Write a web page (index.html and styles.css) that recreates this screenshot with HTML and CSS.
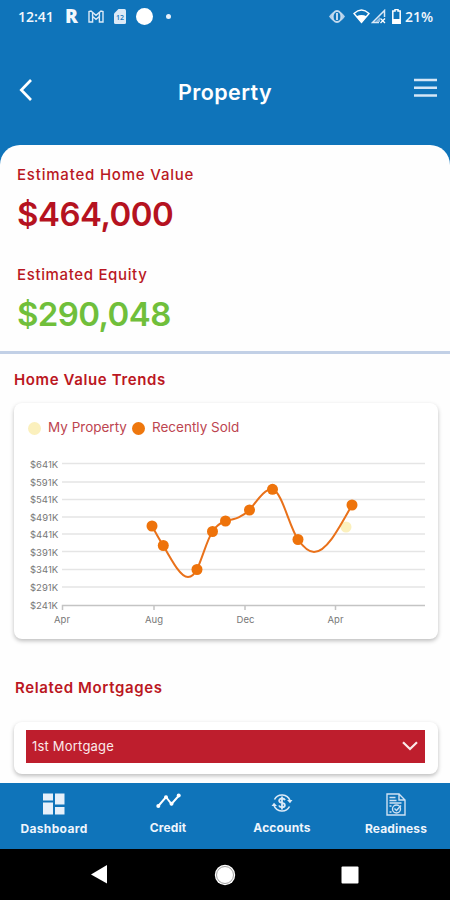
FILE: index.html
```html
<!DOCTYPE html>
<html lang="en">
<head>
    <meta charset="UTF-8">
    <meta name="viewport" content="width=device-width, initial-scale=1.0">
    <title>Property</title>
    <link rel="stylesheet" href="styles.css">
</head>
<body>
    <div class="app">
        <div class="status-bar">
            <span class="status-time">12:41</span>
            <span class="status-r">R</span>
            <svg class="icon-mail" width="16" height="13" viewBox="0 0 16 13" fill="none" stroke="currentColor" stroke-width="1.4">
                <path d="M1 12V1.500L3 1l5 4.300L13 1l2 .500V12h-3.600V6.500L8 9.300 4.600 6.500V12z"></path>
                <path d="M4.600 6.500V2.500M11.400 6.500V2.500"></path>
            </svg>
            <svg class="icon-sim" width="12" height="15" viewBox="0 0 12 15">
                <path d="M4.500 0H10.500Q12 0 12 1.500V13.500Q12 15 10.500 15H1.500Q0 15 0 13.500V4.500z" fill="#dceaf7"></path>
                <text x="6" y="11" text-anchor="middle" class="sim-text">12</text>
            </svg>
            <span class="status-circle"></span>
            <span class="status-dot"></span>
            <svg class="icon-eye" width="16" height="13" viewBox="0 0 16 13">
                <path d="M0 6.500Q2 3.500 4 2.300V10.700Q2 9.500 0 6.500zM16 6.500Q14 3.500 12 2.300V10.700Q14 9.500 16 6.500z" fill="#b4d0ea"></path>
                <ellipse cx="8" cy="6.500" rx="4.300" ry="5.500" fill="none" stroke="#c4daef" stroke-width="1.800"></ellipse>
                <path d="M8 3v7" stroke="#c4daef" stroke-width="2"></path>
            </svg>
            <svg class="icon-wifi" width="17" height="15" viewBox="0 0 17 15">
                <path d="M1 4.500Q8.500-2.500 16 4.500L8.500 13.500z" fill="none" stroke="#fff" stroke-width="1.400"></path>
                <path d="M3.500 7.300Q8.500 4.500 13.500 7.300L8.500 14z" fill="#fff"></path>
            </svg>
            <svg class="icon-signal" width="15" height="15" viewBox="0 0 15 15">
                <path d="M13.500 8V1.500L1.500 13.500H8" fill="none" stroke="#dceaf7" stroke-width="1.500"></path>
                <path d="M4 13L9 8v5z" fill="#8fbbe0"></path>
                <path d="M9.500 9.500l4.500 4.500M14 9.500l-4.500 4.500" stroke="#fff" stroke-width="1.300"></path>
            </svg>
            <svg class="icon-battery" width="9" height="15" viewBox="0 0 9 15">
                <path d="M3 .500h3v1.500H8.200V14.200H.800V2H3z" fill="none" stroke="#fff" stroke-width="1.500"></path>
                <path d="M1 10h7v4H1z" fill="#fff"></path>
            </svg>
            <span class="status-percent">21%</span>
        </div>

        <header class="header">
            <svg class="back" width="14" height="22" viewBox="0 0 14 22" fill="none" stroke="currentColor" stroke-width="2.700">
                <path d="M12 1L2.300 11 12 21"></path>
            </svg>
            <h1 class="title">Property</h1>
            <svg class="menu" width="23" height="20" viewBox="0 0 23 20" stroke="#d5e6f6" stroke-width="2.500">
                <path d="M0 2h23M0 9.700h23M0 17.500h23"></path>
            </svg>
        </header>

        <main class="content">
            <section class="summary">
                <div class="label label-home">Estimated Home Value</div>
                <div class="amount amount-home">$464,000</div>
                <div class="label label-equity">Estimated Equity</div>
                <div class="amount amount-equity">$290,048</div>
            </section>

            <h2 class="section-title trends-title">Home Value Trends</h2>
            <div class="card chart-card">
                <div class="legend">
                    <span class="legend-dot dot-mine"></span>
                    <span class="legend-text legend-mine">My Property</span>
                    <span class="legend-dot dot-sold"></span>
                    <span class="legend-text legend-sold">Recently Sold</span>
                </div>
                <svg class="chart" width="424" height="189" viewBox="0 0 424 189">
                    <path class="grid" d="M48 13.500H411M48 32H411M48 49.500H411M48 67H411M48 84H411M48 101.500H411M48 119.500H411M48 137H411"></path>
                    <path class="axis" d="M48.500 160V155.500H411M140 155.500V160M231 155.500V160M321.500 155.500V160"></path>
                    <g class="y-labels">
                        <text x="16" y="18">$641K</text>
                        <text x="16" y="35.700">$591K</text>
                        <text x="16" y="53">$541K</text>
                        <text x="16" y="71">$491K</text>
                        <text x="16" y="88">$441K</text>
                        <text x="16" y="105.700">$391K</text>
                        <text x="16" y="123.300">$341K</text>
                        <text x="16" y="141">$291K</text>
                        <text x="16" y="158.700">$241K</text>
                    </g>
                    <g class="x-labels">
                        <text x="48" y="173">Apr</text>
                        <text x="140" y="173">Aug</text>
                        <text x="231.500" y="173">Dec</text>
                        <text x="321.500" y="173">Apr</text>
                    </g>
                    <circle class="mine" cx="332" cy="77" r="5.500"></circle>
                    <path class="sold-line" d="M138 76C142 83 145 89 149.300 95.500C159 113 167 127 174 127C178 127 180 124 183 119.500C189 106 193 90 198.500 81.500C202 76 206 73 211.500 71C222 69 228 67 235.500 60C243 51 250 39 258.500 39C268 42 275 76 284 89.500C290 98 295 102 300 102C312 102 323 82 338 55"></path>
                    <g class="sold">
                        <circle cx="138" cy="76" r="5.500"></circle>
                        <circle cx="149.300" cy="95.500" r="5.500"></circle>
                        <circle cx="183" cy="119.500" r="5.500"></circle>
                        <circle cx="198.500" cy="81.500" r="5.500"></circle>
                        <circle cx="211.500" cy="71" r="5.500"></circle>
                        <circle cx="235.500" cy="60" r="5.500"></circle>
                        <circle cx="258.500" cy="39.300" r="5.500"></circle>
                        <circle cx="284" cy="89.500" r="5.500"></circle>
                        <circle cx="338" cy="55" r="5.500"></circle>
                    </g>
                </svg>
            </div>

            <h2 class="section-title mortgages-title">Related Mortgages</h2>
            <div class="card mortgage-card">
                <div class="select">
                    <span>1st Mortgage</span>
                    <svg width="16" height="10" viewBox="0 0 16 10" fill="none" stroke="currentColor" stroke-width="2.200">
                        <path d="M1 1.200L8 8 15 1.200"></path>
                    </svg>
                </div>
            </div>
        </main>

        <nav class="tabs">
            <div class="tab tab-dashboard">
                <svg width="22" height="22" viewBox="0 0 22 22" fill="#e6f0fa">
                    <path d="M0 .500h10v7H0zM12 .500h9.500v11H12zM0 9.500h10v12H0zM12 14h9.500v7.500H12z"></path>
                </svg>
                <span>Dashboard</span>
            </div>
            <div class="tab tab-credit">
                <svg width="25" height="16" viewBox="0 0 25 16" fill="#fff">
                    <path d="M2.300 13L10 4l5.500 7L23 2.500" fill="none" stroke="#fff" stroke-width="2"></path>
                    <circle cx="2.300" cy="13" r="2"></circle>
                    <circle cx="10" cy="4.300" r="2"></circle>
                    <circle cx="15.500" cy="10.700" r="2"></circle>
                    <circle cx="22.700" cy="2.500" r="2"></circle>
                </svg>
                <span>Credit</span>
            </div>
            <div class="tab tab-accounts">
                <svg width="22" height="20" viewBox="0 0 22 20" fill="none" stroke="#dceaf7" stroke-width="1.600">
                    <path d="M3.500 6.500A8.500 8.500 0 0 1 19 7.500M18.500 13.500A8.500 8.500 0 0 1 3 12.500"></path>
                    <path d="M16 7h5.500L19 10.200zM0.500 13h5.500L3 9.800z" fill="#dceaf7" stroke="none"></path>
                    <path d="M14 7.200Q13.300 5.500 11 5.500C7.200 5.500 7.200 9.300 11 9.800C14.800 10.300 14.800 14.300 11 14.300Q8.500 14.300 8 12.500M11 3.500v13" stroke-width="1.800"></path>
                </svg>
                <span>Accounts</span>
            </div>
            <div class="tab tab-readiness">
                <svg width="20" height="23" viewBox="0 0 20 23" fill="none" stroke="#cfe1f3" stroke-width="1.400">
                    <path d="M1 1h12l6 6v15H1zM13 1v6h6"></path>
                    <path d="M3.500 4.500h6M3.500 7.500h7M3.500 10h12M3.500 13h2M3.500 19h2" stroke-width="1.300"></path>
                    <circle cx="10.500" cy="16" r="4"></circle>
                    <path d="M8.500 15.500l2 2 4.500-5"></path>
                </svg>
                <span>Readiness</span>
            </div>
        </nav>

        <div class="system-nav">
            <svg width="17" height="19" viewBox="0 0 17 19" fill="#fff"><path d="M0 9.500L16 0v18.500z"></path></svg>
            <svg width="22" height="22" viewBox="0 0 22 22"><circle cx="11" cy="11" r="10.200" fill="#fff"></circle><circle cx="11" cy="11" r="8.500" fill="none" stroke="#888" stroke-width=".800"></circle></svg>
            <svg width="18" height="18" viewBox="0 0 18 18"><rect x=".500" y=".500" width="17" height="17" rx="1" fill="#fff"></rect></svg>
        </div>
    </div>
</body>
</html>
```
FILE: styles.css
```css
* {
    box-sizing: border-box;
}
body {
    margin: 0;
    font-family: Inter, "Open Sans", sans-serif;
    background: #0f74ba;
}
.app {
    width: 450px;
    height: 900px;
    display: flex;
    flex-direction: column;
    overflow: hidden;
    background: #0f74ba;
}
svg {
    display: block;
    flex-shrink: 0;
}
.status-bar {
    height: 32px;
    padding-left: 18px;
    display: flex;
    align-items: center;
    color: #f2f7fc;
    font-family: "Open Sans", sans-serif;
    font-size: 14px;
    font-weight: 600;
}
.status-time {
    width: 35px;
    white-space: nowrap;
}
.status-r {
    width: 13px;
    margin-left: 12px;
    font-size: 19px;
    font-weight: 800;
}
.icon-mail {
    margin-left: 10px;
    color: #dceaf7;
}
.icon-sim {
    margin-left: 10px;
}
.sim-text {
    font-size: 7px;
    fill: #0f74ba;
}
.status-circle {
    width: 17px;
    height: 17px;
    margin-left: 10px;
    border-radius: 50%;
    background: #fff;
}
.status-dot {
    width: 5px;
    height: 5px;
    margin-left: 13px;
    border-radius: 50%;
    background: #e6f0fa;
}
.icon-eye {
    margin-left: 158px;
}
.icon-wifi {
    margin-left: 8px;
}
.icon-signal {
    margin-left: 1px;
}
.icon-battery {
    margin-left: 6px;
}
.status-percent {
    margin-left: 4px;
}
.header {
    height: 113px;
    padding: 44px 13px 0 19px;
    display: flex;
    justify-content: space-between;
    align-items: flex-start;
    color: #fff;
}
.back {
    margin-top: 3px;
    width: 14px;
}
.title {
    margin: 3px 0 0 3px;
    font-size: 21.5px;
    line-height: 27px;
    font-weight: 600;
    letter-spacing: 0.4px;
}
.menu {
    margin-top: 2px;
}
.content {
    height: 638px;
    border-radius: 20px 20px 0 0;
    background: #fefefe;
    overflow: hidden;
}
.summary {
    height: 209px;
    padding: 20px 17px 0;
    border-bottom: 3px solid #c2d0e6;
}
.label {
    height: 20px;
    line-height: 20px;
    font-size: 15px;
    font-weight: 500;
    letter-spacing: 0.8px;
    color: #b91823;
    white-space: nowrap;
}
.amount {
    height: 40px;
    margin-top: 9px;
    line-height: 40px;
    font-size: 33px;
    font-weight: 600;
    letter-spacing: -0.5px;
}
.amount-home {
    color: #b51220;
}
.amount-equity {
    color: #70bf3b;
    letter-spacing: -0.6px;
}
.label-equity {
    margin-top: 31px;
    letter-spacing: 0.65px;
}
.section-title {
    margin: 0 14px;
    height: 20px;
    font-size: 15px;
    line-height: 20px;
    font-weight: 600;
    letter-spacing: 0.62px;
    color: #bb1722;
}
.trends-title {
    margin-top: 16px;
}
.card {
    width: 424px;
    margin-left: 14px;
    border-radius: 8px;
    background: #fff;
    box-shadow: 0 2px 4px rgba(0, 0, 0, 0.26);
}
.chart-card {
    height: 236px;
    margin-top: 13px;
}
.legend {
    height: 47px;
    padding: 3px 0 0 14px;
    display: flex;
    align-items: center;
    font-size: 13.5px;
    color: #bd4550;
    white-space: nowrap;
}
.legend-dot {
    width: 13px;
    height: 13px;
    border-radius: 50%;
    flex-shrink: 0;
}
.dot-mine {
    background: #fbf0bd;
}
.dot-sold {
    background: #ee770d;
}
.legend-text {
    margin: -2px 0 0 7px;
}
.legend-mine {
    width: 84px;
}
.grid {
    stroke: #e5e5e5;
    stroke-width: 1.5;
}
.axis {
    fill: none;
    stroke: #c4c4c4;
    stroke-width: 1.5;
}
.y-labels text {
    font-size: 9.5px;
    fill: #777;
}
.x-labels text {
    font-size: 9.5px;
    text-anchor: middle;
    fill: #777;
}
.mine {
    fill: #fbf0bd;
}
.sold-line {
    fill: none;
    stroke: #e9711a;
    stroke-width: 2;
}
.sold {
    fill: #ee730b;
}
.mortgages-title {
    margin: 39px 15px 0;
}
.mortgage-card {
    height: 52px;
    margin-top: 24px;
    padding: 8px 13px 11px 12px;
}
.select {
    height: 33px;
    padding: 0 7px 2px 6px;
    display: flex;
    align-items: center;
    justify-content: space-between;
    background: #be1e2d;
    color: #fbe9ea;
    font-size: 13px;
    letter-spacing: 0.2px;
}
.tabs {
    width: 456px;
    height: 66px;
    margin-left: -3px;
    padding-top: 10px;
    display: grid;
    grid-template-columns: repeat(4, 1fr);
    align-items: start;
    color: #eef5fc;
    font-size: 12px;
    line-height: 16px;
    font-weight: 700;
    letter-spacing: 0.15px;
}
.tab {
    display: flex;
    flex-direction: column;
    align-items: center;
    justify-content: space-between;
    height: 44px;
}
.tab-dashboard {
    letter-spacing: 0.35px;
}
.tab-credit,
.tab-accounts {
    height: 43px;
}
.system-nav {
    height: 51px;
    padding: 0 91px;
    display: flex;
    align-items: center;
    justify-content: space-between;
    background: #000;
}
```
